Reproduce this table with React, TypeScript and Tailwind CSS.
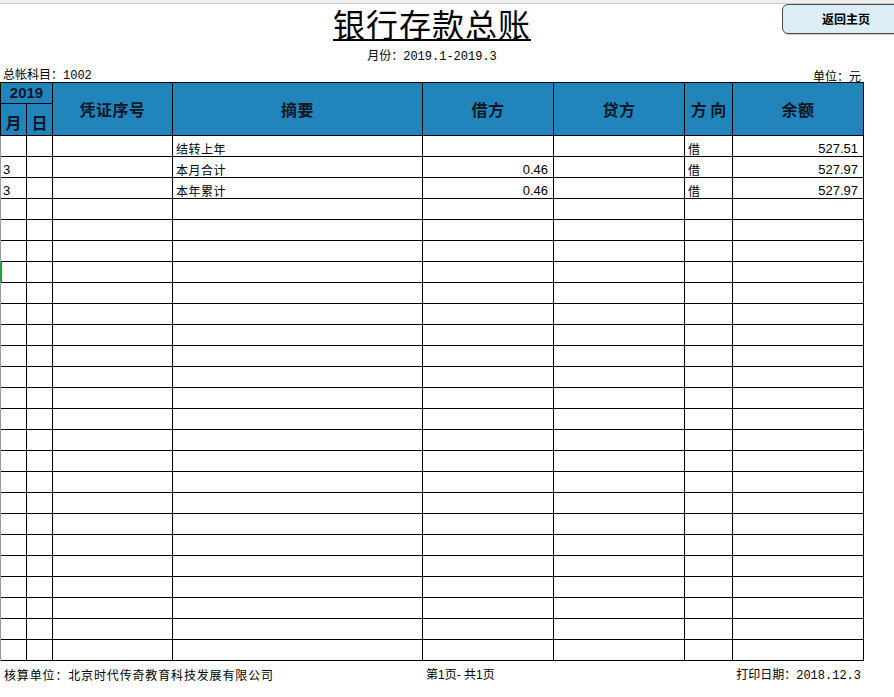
import React from "react";

const CJK = '"Noto Sans CJK SC", "Liberation Sans", sans-serif';
const MONO = '"Liberation Mono", "Noto Sans CJK SC", monospace';
const NUM = '"Liberation Sans", "Noto Sans CJK SC", sans-serif';

type Row = [string, string, string, string, string, string, string, string];

const rows: Row[] = [
  ["", "", "", "结转上年", "", "", "借", "527.51"],
  ["3", "", "", "本月合计", "0.46", "", "借", "527.97"],
  ["3", "", "", "本年累计", "0.46", "", "借", "527.97"],
];
while (rows.length < 25) rows.push(["", "", "", "", "", "", "", ""]);

const headCell =
  "border-r border-b border-black bg-[#2185bb] text-[#0b1626] font-bold flex items-center justify-center";

export default function App() {
  return (
    <div className="relative w-[894px] h-[697px] overflow-hidden bg-white" style={{ fontFamily: CJK }}>
      {/* spreadsheet header strip */}
      <div className="h-[4px] bg-[#efefef] border-b border-[#cfcfcf]" />

      {/* return button */}
      <div className="absolute left-[782px] top-[4px] w-[128px] h-[30px] rounded-[6px] border border-[#4a4a4a] bg-[#dcedf3] shadow-[1px_1px_1px_rgba(0,0,0,0.25)] flex items-center justify-center">
        <span className="text-[12px] font-bold text-black leading-none">返回主页</span>
      </div>

      {/* title block */}
      <div className="w-[864px] h-[78px] flex flex-col items-center">
        <div className="h-[38px] text-[32px] tracking-[1px] leading-[38px] text-black underline decoration-[2px] underline-offset-[2px]">
          银行存款总账
        </div>
        <div className="mt-[8px] h-[14px] text-[12px] leading-[14px] text-black" style={{ fontFamily: MONO }}>
          月份：2019.1-2019.3
        </div>
        <div className="mt-[5px] w-full h-[14px] flex justify-between pl-[3px] pr-[3px] text-[12px] leading-[14px] text-black">
          <span style={{ fontFamily: MONO }}>总帐科目：1002</span>
          <span>单位：元</span>
        </div>
      </div>

      {/* table header */}
      <div className="relative w-[864px] grid grid-cols-[26px_26px_120px_250px_131px_131px_48px_131px] grid-rows-[21px_32px] border-t border-l border-black">
        <div className={`${headCell} col-span-2 text-[15px]`} style={{ fontFamily: NUM }}>
          2019
        </div>
        <div className={`${headCell} row-span-2 text-[16px] tracking-[0.5px]`}>凭证序号</div>
        <div className={`${headCell} row-span-2 text-[16px] tracking-[0.5px]`}>摘要</div>
        <div className={`${headCell} row-span-2 text-[16px] tracking-[0.5px]`}>借方</div>
        <div className={`${headCell} row-span-2 text-[16px] tracking-[0.5px]`}>贷方</div>
        <div className={`${headCell} row-span-2 text-[16px]`}>方 向</div>
        <div className={`${headCell} row-span-2 text-[16px] tracking-[0.5px]`}>余额</div>
        <div className={`${headCell} !items-end pb-[1px] text-[16px]`}>月</div>
        <div className={`${headCell} !items-end pb-[1px] text-[16px]`}>日</div>
        <div className="absolute left-0 top-0 w-0 h-0 border-t-[5px] border-r-[5px] border-t-[#1fa04a] border-r-transparent" />
      </div>

      {/* table body */}
      <div className="relative w-[864px] grid grid-cols-[26px_26px_120px_250px_131px_131px_48px_131px] auto-rows-[21px] border-l border-[#9a9a9a]">
        {rows.map((r, i) => (
          <React.Fragment key={i}>
            <div className="border-r border-b border-black flex items-end pl-[2px] text-[13px] leading-[15px]" style={{ fontFamily: NUM }}>
              {r[0]}
            </div>
            <div className="border-r border-b border-black" />
            <div className="border-r border-b border-black" />
            <div className="border-r border-b border-black flex items-end pl-[3px] text-[12px] tracking-[0.5px] leading-[15px] text-black">
              {r[3]}
            </div>
            <div className="border-r border-b border-black flex items-end justify-end pr-[5px] text-[13px] leading-[15px]" style={{ fontFamily: NUM }}>
              {r[4]}
            </div>
            <div className="border-r border-b border-black" />
            <div className="border-r border-b border-black flex items-end pl-[3px] text-[12px] leading-[15px]">
              {r[6]}
            </div>
            <div className="border-r border-b border-black flex items-end justify-end pr-[5px] text-[13px] leading-[15px]" style={{ fontFamily: NUM }}>
              {r[7]}
            </div>
          </React.Fragment>
        ))}
        <div className="absolute left-[-1px] top-[126px] w-[2px] h-[20px] bg-[#1fa04a]" />
      </div>

      {/* footer */}
      <div className="w-[864px] flex items-center pt-[6px] text-[12px] leading-[14px] text-black">
        <div className="w-[426px] pl-[4px] tracking-[0.85px]">核算单位：北京时代传奇教育科技发展有限公司</div>
        <div style={{ fontFamily: NUM }}>第1页- 共1页</div>
        <div className="ml-auto pr-[3px]">
          打印日期：<span style={{ fontFamily: MONO }}>2018.12.3</span>
        </div>
      </div>
    </div>
  );
}
